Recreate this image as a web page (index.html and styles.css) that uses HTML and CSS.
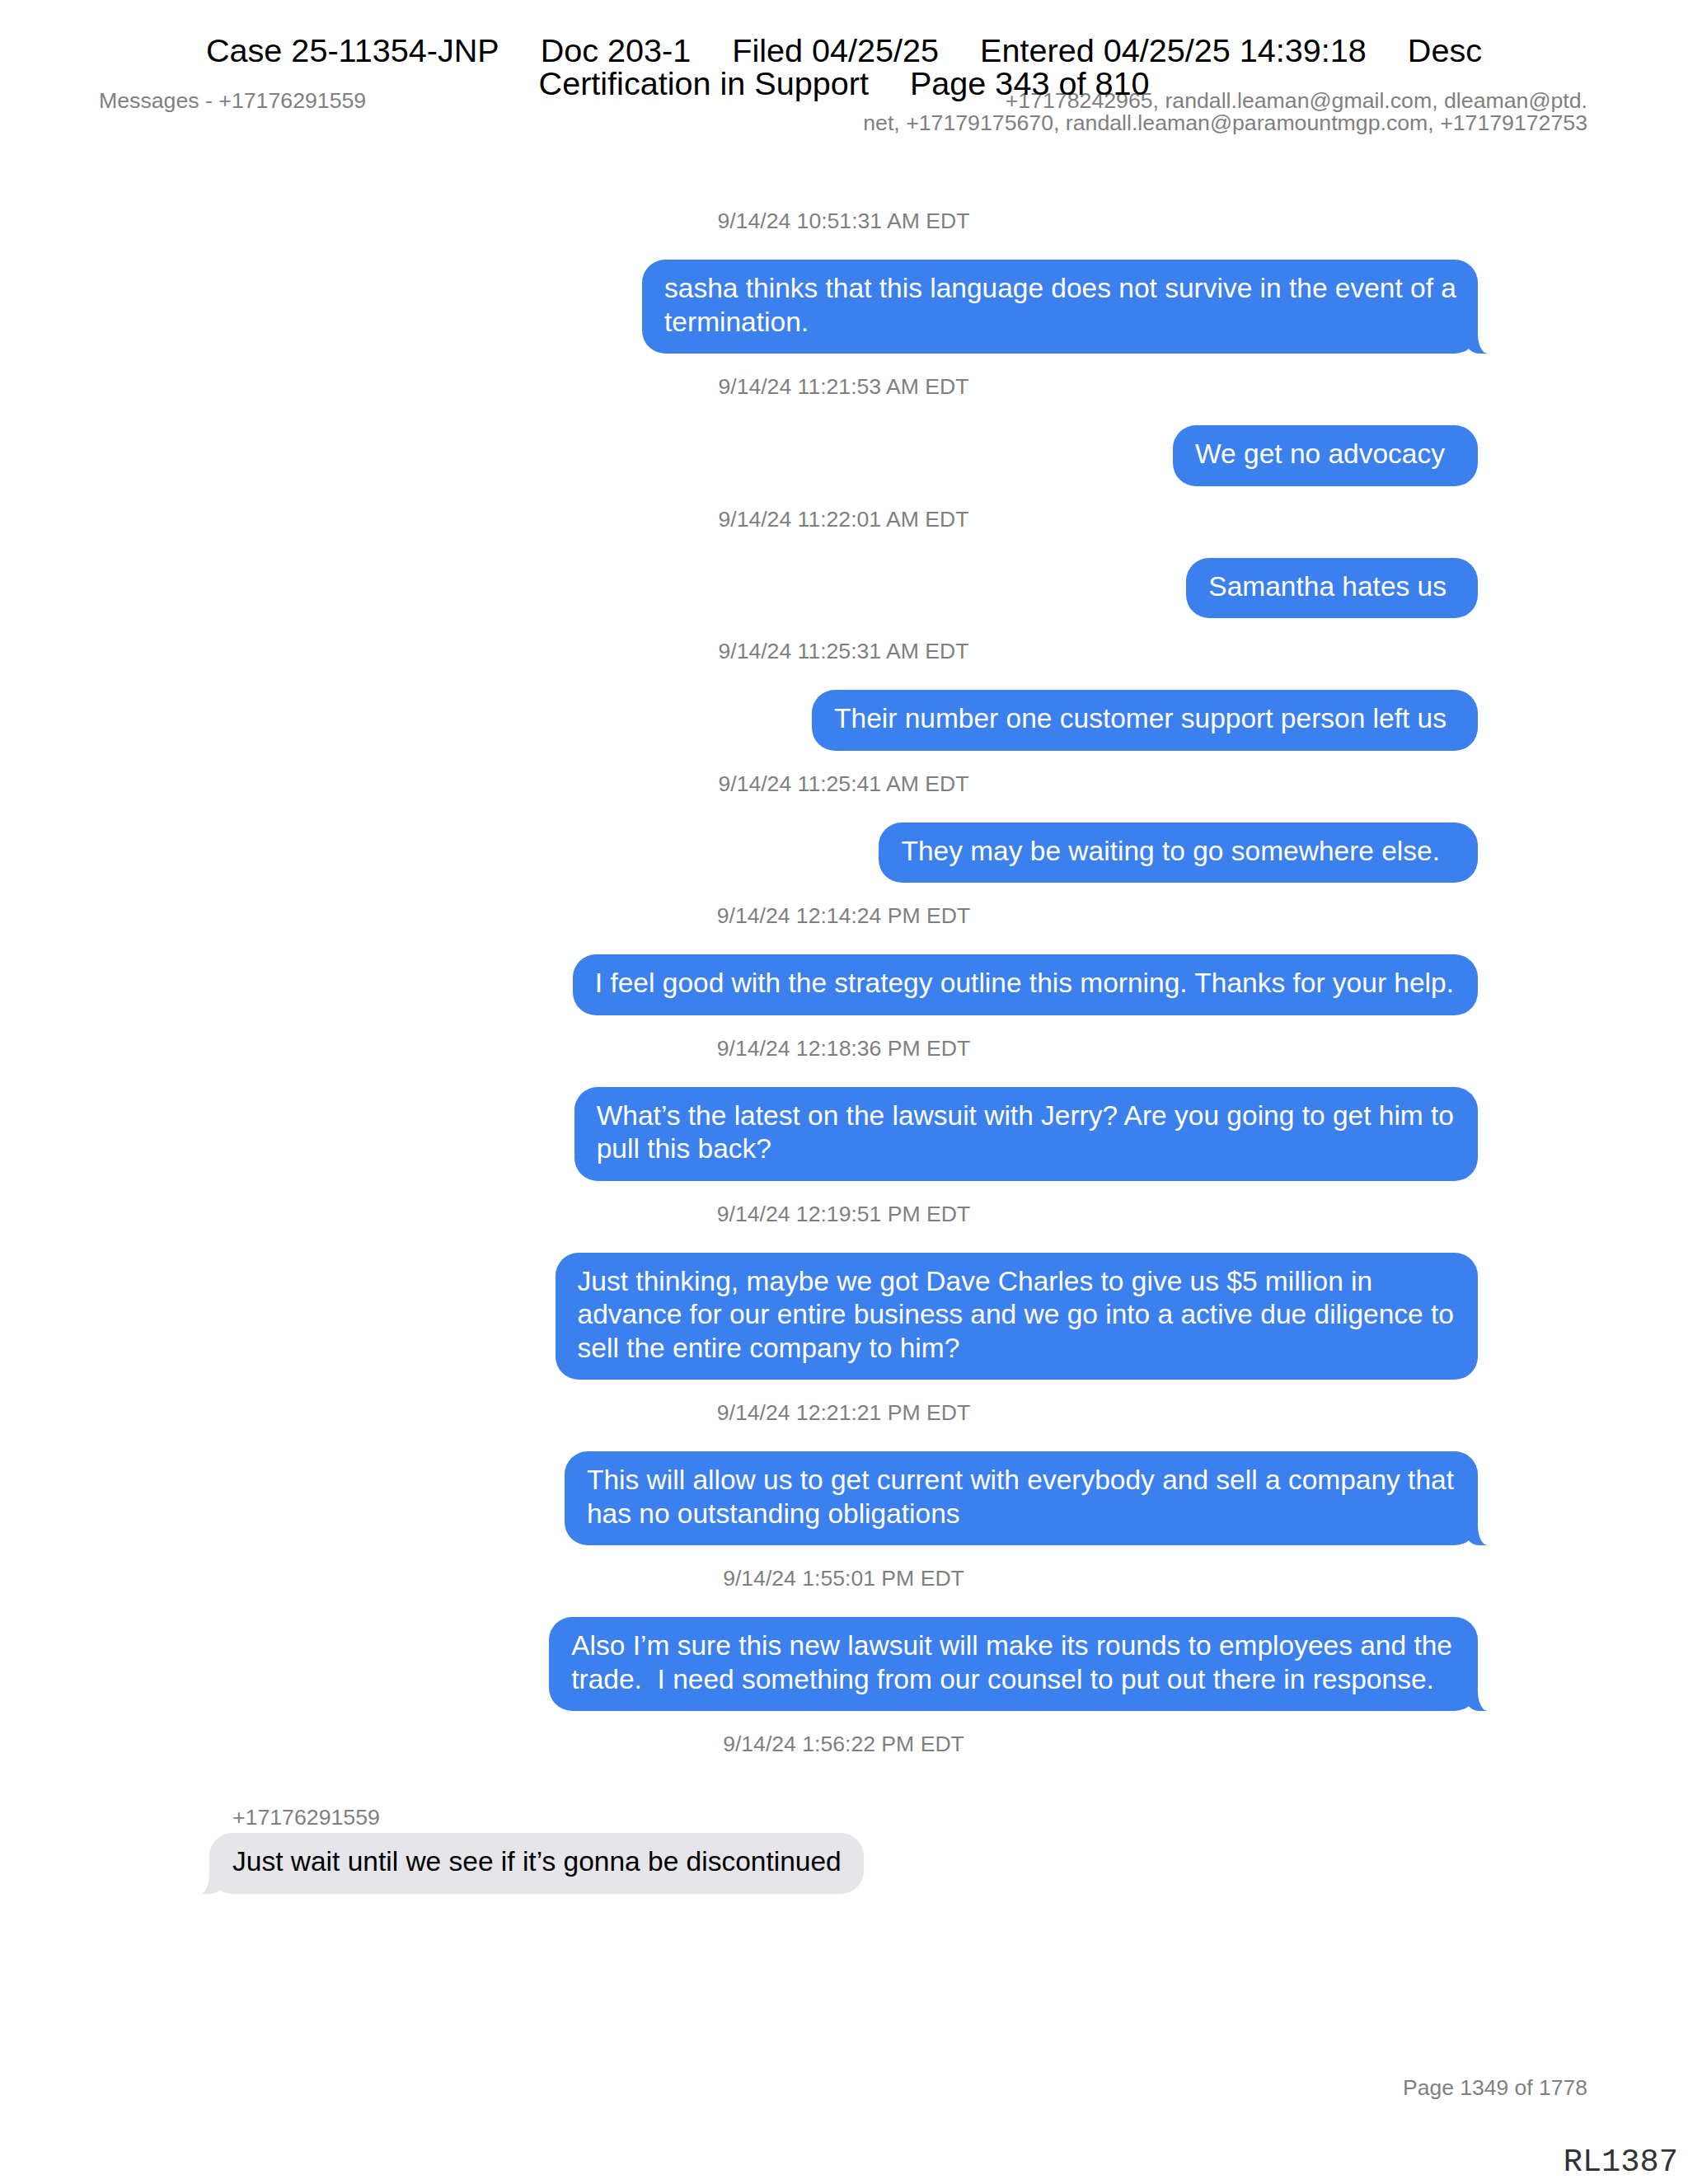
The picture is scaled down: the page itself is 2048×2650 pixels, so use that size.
FILE: index.html
```html
<!DOCTYPE html>
<html lang="en">
<head>
<meta charset="utf-8">
<title>Messages - +17176291559</title>
<link rel="stylesheet" href="styles.css">
</head>
<body>
<div class="page">
  <div class="stamp">
    <div class="stamp-line">
      <span>Case 25-11354-JNP</span>
      <span>Doc 203-1</span>
      <span>Filed 04/25/25</span>
      <span>Entered 04/25/25 14:39:18</span>
      <span>Desc</span>
    </div>
    <div class="stamp-line">
      <span>Certification in Support</span>
      <span>Page 343 of 810</span>
    </div>
  </div>

  <header class="doc-header">
    <div class="title">Messages - +17176291559</div>
    <div class="participants">+17178242965, randall.leaman@gmail.com, dleaman@ptd.<br>net, +17179175670, randall.leaman@paramountmgp.com, +17179172753</div>
  </header>

  <main class="thread">
    <div class="msg sent">
      <div class="time">9/14/24 10:51:31 AM EDT</div>
      <div class="bubble tail-right pr-26">sasha thinks that this language does not survive in the event of a<br>termination.</div>
    </div>
    <div class="msg sent">
      <div class="time">9/14/24 11:21:53 AM EDT</div>
      <div class="bubble pr-40">We get no advocacy</div>
    </div>
    <div class="msg sent">
      <div class="time">9/14/24 11:22:01 AM EDT</div>
      <div class="bubble pr-38">Samantha hates us</div>
    </div>
    <div class="msg sent">
      <div class="time">9/14/24 11:25:31 AM EDT</div>
      <div class="bubble pr-38">Their number one customer support person left us</div>
    </div>
    <div class="msg sent">
      <div class="time">9/14/24 11:25:41 AM EDT</div>
      <div class="bubble pr-46">They may be waiting to go somewhere else.</div>
    </div>
    <div class="msg sent">
      <div class="time">9/14/24 12:14:24 PM EDT</div>
      <div class="bubble">I feel good with the strategy outline this morning. Thanks for your help.</div>
    </div>
    <div class="msg sent">
      <div class="time">9/14/24 12:18:36 PM EDT</div>
      <div class="bubble">What’s the latest on the lawsuit with Jerry? Are you going to get him to<br>pull this back?</div>
    </div>
    <div class="msg sent">
      <div class="time">9/14/24 12:19:51 PM EDT</div>
      <div class="bubble">Just thinking, maybe we got Dave Charles to give us $5 million in<br>advance for our entire business and we go into a active due diligence to<br>sell the entire company to him?</div>
    </div>
    <div class="msg sent">
      <div class="time">9/14/24 12:21:21 PM EDT</div>
      <div class="bubble tail-right">This will allow us to get current with everybody and sell a company that<br>has no outstanding obligations</div>
    </div>
    <div class="msg sent">
      <div class="time">9/14/24 1:55:01 PM EDT</div>
      <div class="bubble tail-right pr-31">Also I’m sure this new lawsuit will make its rounds to employees and the<br>trade.&nbsp; I need something from our counsel to put out there in response.</div>
    </div>
    <div class="msg received">
      <div class="time">9/14/24 1:56:22 PM EDT</div>
      <div class="sender">+17176291559</div>
      <div class="bubble tail-left">Just wait until we see if it’s gonna be discontinued</div>
    </div>
  </main>

  <footer class="doc-footer">
    <div class="page-count">Page 1349 of 1778</div>
    <div class="bates">RL1387</div>
  </footer>
</div>
</body>
</html>
```

FILE: styles.css
```css
* {
  box-sizing: border-box;
}

body {
  margin: 0;
  background: #ffffff;
  font-family: "Liberation Sans", Arial, Helvetica, sans-serif;
}

.page {
  position: relative;
  width: 2048px;
  min-height: 2650px;
  display: flex;
  flex-direction: column;
  padding-bottom: 4px;
}

/* Court filing stamp overlaid on top of the page */
.stamp {
  position: absolute;
  top: 41px;
  left: 0;
  right: 0;
  font-size: 39.6px;
  line-height: 40px;
  color: #000000;
  z-index: 5;
}

.stamp-line {
  display: flex;
  justify-content: center;
  gap: 50px;
  white-space: nowrap;
}

/* Export header */
.doc-header {
  display: flex;
  justify-content: space-between;
  align-items: flex-start;
  padding: 109px 122px 0 120px;
  font-size: 26.7px;
  line-height: 27px;
  color: #808080;
}

.participants {
  text-align: right;
  white-space: nowrap;
}

/* Conversation */
.thread {
  display: flex;
  flex-direction: column;
  gap: 25px;
  margin-top: 90px;
  padding: 0 255px 0 254px;
}

.msg {
  display: flex;
  flex-direction: column;
}

.msg.sent {
  align-items: flex-end;
}

.msg.received {
  align-items: flex-start;
}

.time {
  align-self: stretch;
  text-align: center;
  font-size: 26.6px;
  line-height: 30px;
  color: #7f7f7f;
  margin-bottom: 32px;
}

.sender {
  font-size: 26.7px;
  line-height: 30px;
  color: #7f7f7f;
  padding-left: 28px;
  margin-top: 27px;
  margin-bottom: 4px;
}

.bubble {
  position: relative;
  font-size: 33.5px;
  line-height: 40.5px;
  padding: 15px 29px 18px 27px;
  border-radius: 28px;
  white-space: nowrap;
}

.sent .bubble {
  background: #3b80ec;
  color: #ffffff;
}

.received .bubble {
  background: #e5e5ea;
  color: #000000;
  padding-left: 28px;
  padding-right: 27px;
}

.pr-26 { padding-right: 26px; }
.pr-31 { padding-right: 31px; }
.pr-38 { padding-right: 38px; }
.pr-40 { padding-right: 40px; }
.pr-46 { padding-right: 46px; }

/* Bubble tails */
.tail-right::before {
  content: "";
  position: absolute;
  right: -12px;
  bottom: 0;
  width: 26px;
  height: 26px;
  background: #3b80ec;
  border-bottom-left-radius: 16px 14px;
  z-index: 0;
}

.tail-right::after {
  content: "";
  position: absolute;
  right: -30px;
  bottom: 0;
  width: 30px;
  height: 30px;
  background: #ffffff;
  border-bottom-left-radius: 12px 24px;
  z-index: 1;
}

.tail-left::before {
  content: "";
  position: absolute;
  left: -10px;
  bottom: 0;
  width: 26px;
  height: 30px;
  background: #e5e5ea;
  border-bottom-right-radius: 16px 14px;
  z-index: 0;
}

.tail-left::after {
  content: "";
  position: absolute;
  left: -30px;
  bottom: 0;
  width: 30px;
  height: 34px;
  background: #ffffff;
  border-bottom-right-radius: 10px 28px;
  z-index: 1;
}

/* Footer */
.doc-footer {
  margin-top: auto;
  display: flex;
  flex-direction: column;
}

.page-count {
  text-align: right;
  padding-right: 122px;
  font-size: 26.5px;
  line-height: 30px;
  color: #808080;
}

.bates {
  margin-top: 54px;
  text-align: right;
  padding-right: 12px;
  font-family: "Liberation Mono", "Courier New", monospace;
  font-size: 38.7px;
  line-height: 44px;
  color: #333333;
}
```
